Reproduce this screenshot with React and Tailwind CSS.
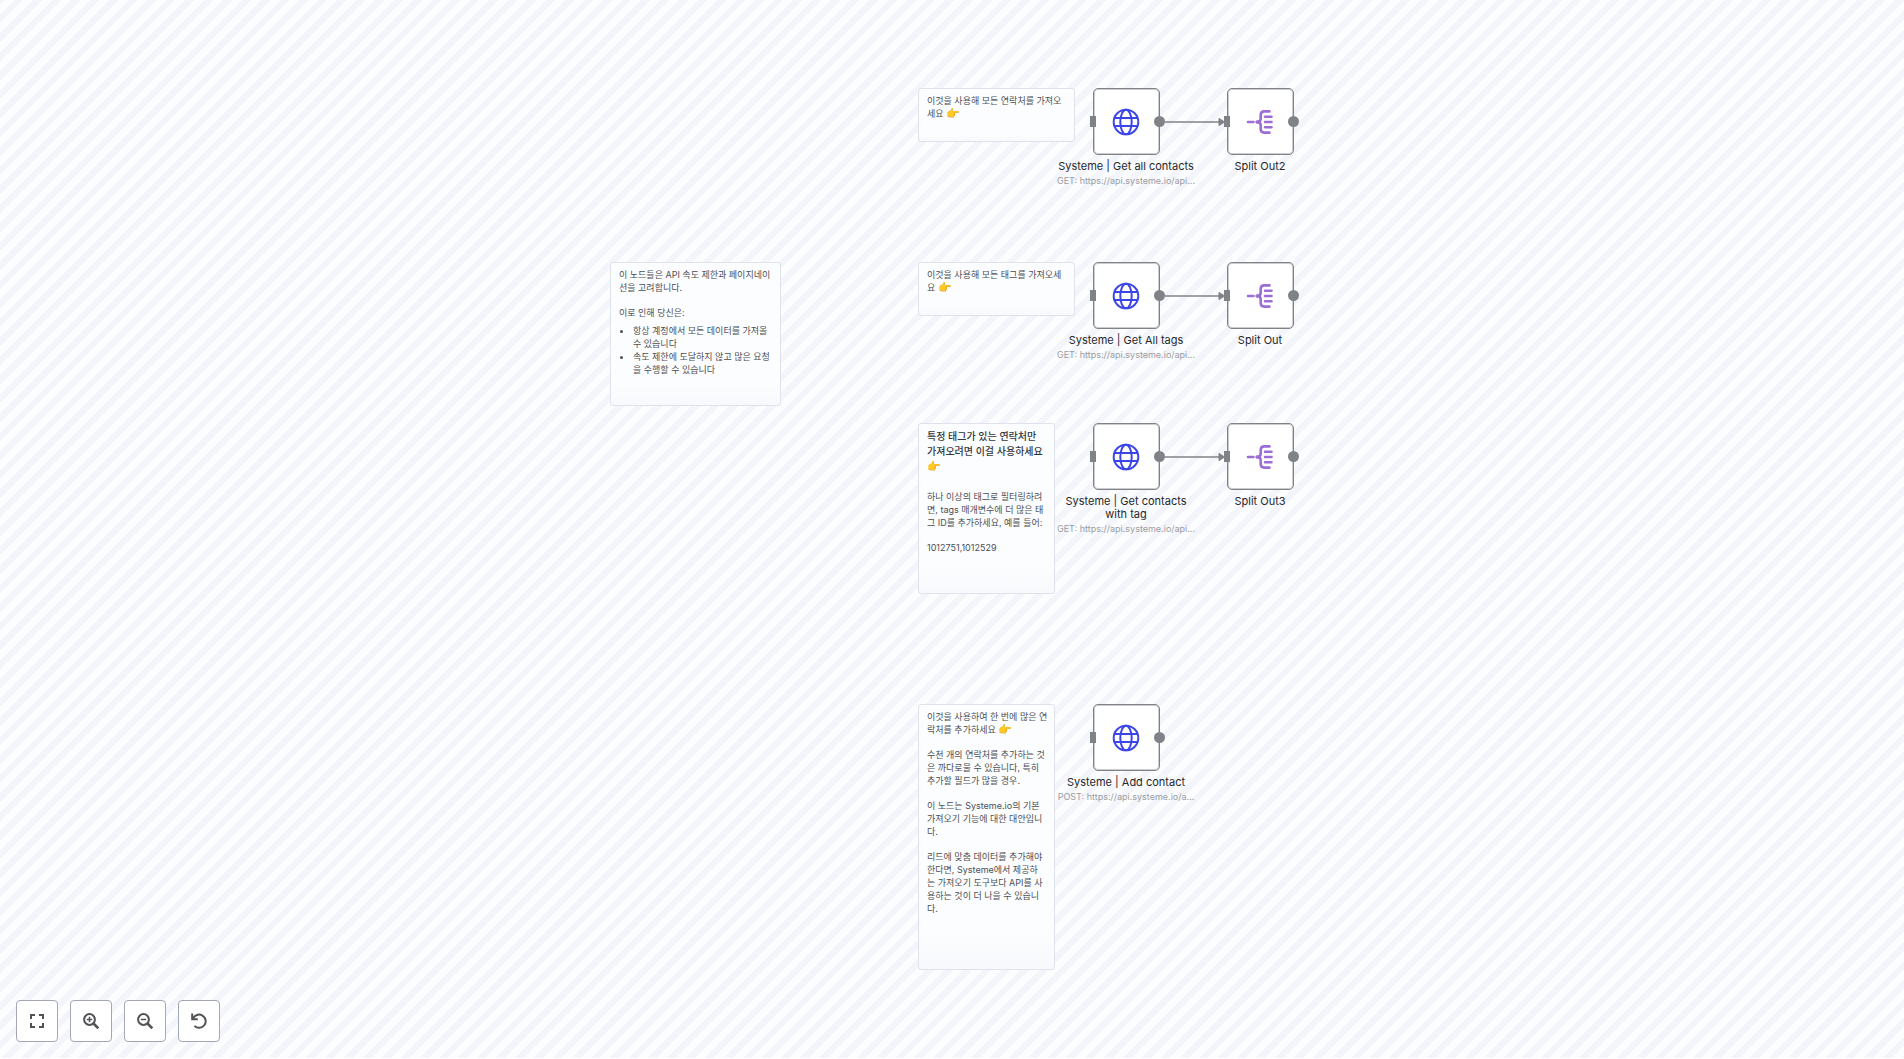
const stripes =
  "bg-[linear-gradient(135deg,#f3f5fb_12.5%,#fcfdff_12.5%,#fcfdff_37.5%,#f3f5fb_37.5%,#f3f5fb_62.5%,#fcfdff_62.5%,#fcfdff_87.5%,#f3f5fb_87.5%)] bg-[length:19px_19px]";

function GlobeIcon() {
  return (
    <svg viewBox="0 0 28 28" className="size-7" fill="none" stroke="#3c45e8" strokeWidth="2" aria-hidden="true">
      <circle cx="14" cy="14" r="12.3" />
      <ellipse cx="14" cy="14" rx="5.7" ry="12.3" />
      <path d="M2.4 10h23.2M2.4 18h23.2" />
    </svg>
  );
}

function SplitIcon() {
  return (
    <svg viewBox="0 0 28 28" className="size-7" fill="none" stroke="#9b6dd5" strokeWidth="2.6" strokeLinecap="round" aria-hidden="true">
      <path d="M2 14h5.4M23.5 3.4h-5.2q-3.6 0-3.6 3.6v3.6q0 3.4-3 3.4 3 0 3 3.4V21q0 3.6 3.6 3.6h5.2" />
      <path d="M11 14h1.8" strokeWidth="3.4" />
      <path d="M19 8.8h6.5M19 14h6.5M19 19.2h6.5" />
    </svg>
  );
}

function Note({ className, children }) {
  return (
    <section
      className={`absolute flex flex-col gap-3 rounded-[3px] border border-[#dfe1ec] bg-linear-to-b from-[#fcfdfe] from-85% to-[#f8f9fd] px-2 py-[5px] text-[9px] leading-[13px] whitespace-nowrap text-[#4c4e54] ${className}`}
    >
      {children}
    </section>
  );
}

function Hand() {
  return <span className="text-[11px] leading-none">👉</span>;
}

function Node({ className, icon, title, sub }) {
  return (
    <article className={`absolute flex w-[134px] flex-col items-center ${className}`}>
      <div className="relative flex size-[67px] items-center justify-center rounded-[5px] border border-[#7f8287] bg-white ring-1 ring-[#7f8287]/40 ring-inset">
        {icon}
        <span className="absolute top-[27px] -left-1 h-[11px] w-1.5 bg-[#7f8287]" />
        <span className="absolute top-[27px] -right-1.5 size-[11px] rounded-full bg-[#7f8287]" />
      </div>
      <h2 className="mt-[5px] text-center text-[11px] leading-[13px] whitespace-pre text-[#26282c]">{title}</h2>
      {sub && <p className="mt-px text-[9px] leading-[13px] whitespace-nowrap text-[#999ca1]">{sub}</p>}
    </article>
  );
}

function Edge({ className }) {
  return (
    <svg viewBox="0 0 60 8" className={`absolute h-2 w-[60px] ${className}`} aria-hidden="true">
      <path d="M0 4h56" stroke="#7f8287" strokeWidth="1.4" />
      <path d="M54 0.4l5.6 3.6-5.6 3.6z" fill="#7f8287" stroke="#7f8287" strokeWidth="1" />
    </svg>
  );
}

function Control({ label, children }) {
  return (
    <button type="button" aria-label={label} className="flex size-[42px] items-center justify-center rounded-[4px] border border-[#a3a7b7] bg-white">
      <svg viewBox="0 0 16 16" className="size-4" fill="none" stroke="#525356" strokeWidth="2" aria-hidden="true">
        {children}
      </svg>
    </button>
  );
}

export default function App() {
  return (
    <main className={`relative h-screen min-h-[1000px] w-full overflow-hidden border-b border-white font-[Inter,'Noto_Sans_CJK_KR',sans-serif] ${stripes}`}>
      <Note className="top-[88px] left-[918px] h-[54px] w-[157px]">
        <p>이것을 사용해 모든 연락처를 가져오<br />세요 <Hand /></p>
      </Note>
      <Note className="top-[262px] left-[918px] h-[54px] w-[157px]">
        <p>이것을 사용해 모든 태그를 가져오세<br />요 <Hand /></p>
      </Note>
      <Note className="top-[262px] left-[610px] h-[144px] w-[171px]">
        <p>이 노드들은 API 속도 제한과 페이지네이<br />션을 고려합니다.</p>
        <div>
          <p>이로 인해 당신은:</p>
          <ul className="mt-[5px] list-disc pl-3.5 marker:text-[10px]">
            <li>항상 계정에서 모든 데이터를 가져올<br />수 있습니다</li>
            <li>속도 제한에 도달하지 않고 많은 요청<br />을 수행할 수 있습니다</li>
          </ul>
        </div>
      </Note>
      <Note className="top-[423px] left-[918px] h-[171px] w-[137px]">
        <h3 className="mb-1 text-[10px] leading-[15px] font-medium text-[#34363b]">
          특정 태그가 있는 연락처만<br />가져오려면 이걸 사용하세요<br /><Hand />
        </h3>
        <p>하나 이상의 태그로 필터링하려<br />면, tags 매개변수에 더 많은 태<br />그 ID를 추가하세요, 예를 들어:</p>
        <p>1012751,1012529</p>
      </Note>
      <Note className="top-[704px] left-[918px] h-[266px] w-[137px]">
        <p>이것을 사용하여 한 번에 많은 연<br />락처를 추가하세요 <Hand /></p>
        <p>수천 개의 연락처를 추가하는 것<br />은 까다로울 수 있습니다, 특히<br />추가할 필드가 많을 경우.</p>
        <p>이 노드는 Systeme.io의 기본<br />가져오기 기능에 대한 대안입니<br />다.</p>
        <p>리드에 맞춤 데이터를 추가해야<br />한다면, Systeme에서 제공하<br />는 가져오기 도구보다 API를 사<br />용하는 것이 더 나을 수 있습니<br />다.</p>
      </Note>

      <Node className="top-[88px] left-[1059px]" icon={<GlobeIcon />} title="Systeme | Get all contacts" sub="GET: https://api.systeme.io/api..." />
      <Node className="top-[88px] left-[1193px]" icon={<SplitIcon />} title="Split Out2" />
      <Edge className="top-[118px] left-[1165px]" />
      <Node className="top-[262px] left-[1059px]" icon={<GlobeIcon />} title="Systeme | Get All tags" sub="GET: https://api.systeme.io/api..." />
      <Node className="top-[262px] left-[1193px]" icon={<SplitIcon />} title="Split Out" />
      <Edge className="top-[292px] left-[1165px]" />
      <Node className="top-[423px] left-[1059px]" icon={<GlobeIcon />} title={"Systeme | Get contacts\nwith tag"} sub="GET: https://api.systeme.io/api..." />
      <Node className="top-[423px] left-[1193px]" icon={<SplitIcon />} title="Split Out3" />
      <Edge className="top-[453px] left-[1165px]" />
      <Node className="top-[704px] left-[1059px]" icon={<GlobeIcon />} title="Systeme | Add contact" sub="POST: https://api.systeme.io/a..." />

      <nav aria-label="Canvas controls" className="absolute bottom-4 left-4 flex gap-3">
        <Control label="Fit to view">
          <path d="M6 2H2v4M10 2h4v4M6 14H2v-4M10 14h4v-4" />
        </Control>
        <Control label="Zoom in">
          <circle cx="6.5" cy="6.5" r="5.4" />
          <path d="M10.5 10.5l4.8 4.8" strokeWidth="2.6" />
          <path d="M6.5 3.8v5.4M3.8 6.5h5.4" strokeWidth="1.5" />
        </Control>
        <Control label="Zoom out">
          <circle cx="6.5" cy="6.5" r="5.4" />
          <path d="M10.5 10.5l4.8 4.8" strokeWidth="2.6" />
          <path d="M3.8 6.5h5.4" strokeWidth="1.5" />
        </Control>
        <Control label="Reset zoom">
          <path d="M1.2 0.6v5.6h5.6M2 5.6A6.6 6.6 0 1 1 3.4 12.9" />
        </Control>
      </nav>
    </main>
  );
}
